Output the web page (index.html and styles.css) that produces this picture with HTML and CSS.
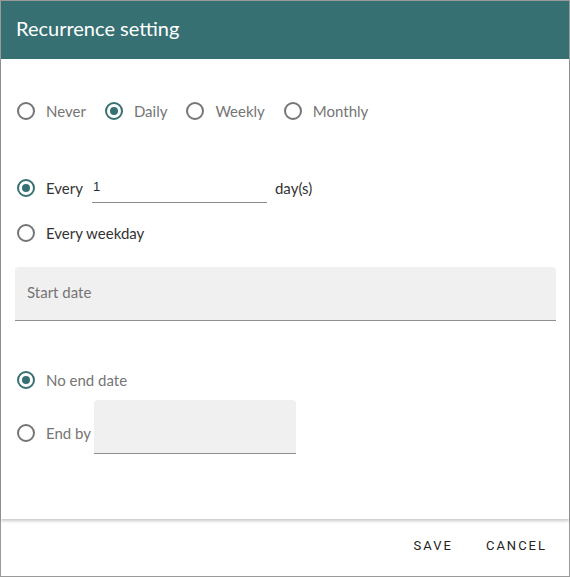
FILE: index.html
```html
<!DOCTYPE html>
<html lang="en">
<head>
<meta charset="utf-8">
<title>Recurrence setting</title>
<link rel="stylesheet" href="styles.css">
</head>
<body>
<div class="dialog">
  <div class="header">Recurrence setting</div>
  <div class="content">
    <div class="freq-row">
      <label class="radio muted"><span class="circle"></span><span>Never</span></label>
      <label class="radio muted"><span class="circle on"></span><span>Daily</span></label>
      <label class="radio muted"><span class="circle"></span><span>Weekly</span></label>
      <label class="radio muted"><span class="circle"></span><span>Monthly</span></label>
    </div>
    <div class="every-row">
      <label class="radio dark"><span class="circle on"></span><span>Every</span></label>
      <div class="num-input">1</div>
      <span class="dark unit">day(s)</span>
    </div>
    <div class="weekday-row">
      <label class="radio dark"><span class="circle"></span><span>Every weekday</span></label>
    </div>
    <div class="field start-field"><span class="placeholder">Start date</span></div>
    <div class="noend-row">
      <label class="radio muted"><span class="circle on"></span><span>No end date</span></label>
    </div>
    <div class="endby-row">
      <label class="radio muted endby-label"><span class="circle"></span><span>End by</span></label>
      <div class="field end-field"></div>
    </div>
  </div>
  <div class="footer">
    <button class="btn">Save</button>
    <button class="btn">Cancel</button>
  </div>
</div>
</body>
</html>
```
FILE: styles.css
```css
html, body {
  margin: 0;
  padding: 0;
  background: #fff;
}
.dialog {
  width: 570px;
  height: 577px;
  box-sizing: border-box;
  border: 1px solid #9a9a9a;
  display: flex;
  flex-direction: column;
  font-family: "Lato", "Open Sans", sans-serif;
}
.header {
  height: 58px;
  flex: none;
  box-sizing: border-box;
  background: #367073;
  color: #fff;
  font-size: 20px;
  display: flex;
  align-items: center;
  padding: 0 0 4px 15px;
}
.content {
  height: 460px;
  flex: none;
  box-sizing: border-box;
  padding: 40px 13px 0 14px;
  box-shadow: 0 2px 3px rgba(0, 0, 0, 0.22);
  position: relative;
  z-index: 1;
  display: flex;
  flex-direction: column;
}
.radio {
  display: flex;
  align-items: center;
  height: 24px;
  font-size: 15px;
  white-space: nowrap;
}
.circle {
  width: 18px;
  height: 18px;
  box-sizing: border-box;
  border: 2px solid #757575;
  border-radius: 50%;
  margin: 0 11px 0 2px;
  display: flex;
  align-items: center;
  justify-content: center;
  flex: none;
}
.circle.on {
  border-color: #367073;
}
.circle.on::after {
  content: "";
  width: 8px;
  height: 8px;
  border-radius: 50%;
  background: #367073;
}
.muted { color: #757575; }
.dark { color: #333; }
.freq-row {
  display: flex;
  gap: 17px;
}
.every-row {
  display: flex;
  align-items: center;
  margin-top: 53px;
  height: 24px;
}
.num-input {
  width: 175px;
  height: 26px;
  box-sizing: border-box;
  margin: 1px 8px 0 9px;
  border-bottom: 1px solid #8a8a8a;
  font-family: "Liberation Sans", Arial, sans-serif;
  font-size: 13px;
  color: #1d2b3a;
  padding: 2px 0 0 1px;
  align-self: flex-start;
}
.unit {
  font-size: 15px;
}
.weekday-row {
  margin-top: 21px;
}
.field {
  background: #f0f0f0;
  border-radius: 4px 4px 0 0;
  border-bottom: 1px solid #8f8f8f;
  box-sizing: border-box;
}
.start-field {
  margin-top: 22px;
  height: 54px;
  display: flex;
  align-items: center;
  padding: 0 0 3px 12px;
}
.placeholder {
  color: #757575;
  font-size: 15px;
}
.noend-row {
  margin-top: 47px;
}
.endby-row {
  display: flex;
  margin-top: 8px;
  height: 54px;
}
.endby-label {
  margin-top: 21px;
}
.end-field {
  width: 202px;
  height: 54px;
  margin-left: 3px;
}
.footer {
  flex: 1;
  display: flex;
  justify-content: flex-end;
  align-items: center;
  padding: 0 22px 4px 0;
  gap: 33px;
}
.btn {
  background: none;
  border: none;
  padding: 0;
  font-family: "Roboto", "Liberation Sans", sans-serif;
  font-size: 13px;
  letter-spacing: 2px;
  text-transform: uppercase;
  color: #222;
  cursor: pointer;
}
```
